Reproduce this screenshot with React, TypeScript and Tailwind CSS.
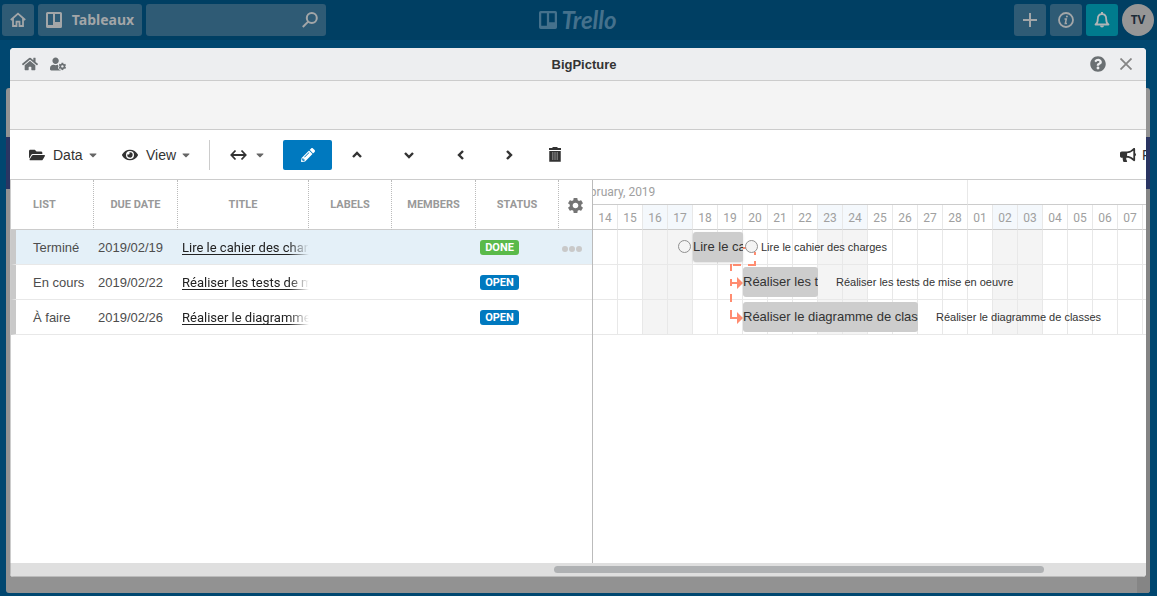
import React from "react";
import {
  FaBullhorn,
  FaCaretDown,
  FaEye,
  FaFolderOpen,
  FaHome,
  FaPencilAlt,
  FaQuestionCircle,
  FaUserCog,
} from "react-icons/fa";
import { MdSettings } from "react-icons/md";

type Task = {
  list: string;
  due: string;
  title: string;
  status: "DONE" | "OPEN";
  start: number;
  days: number;
  selected?: boolean;
};

const DAY = 25;

const tasks: Task[] = [
  { list: "Terminé", due: "2019/02/19", title: "Lire le cahier des charges", status: "DONE", start: 4, days: 2, selected: true },
  { list: "En cours", due: "2019/02/22", title: "Réaliser les tests de mise en oeuvre", status: "OPEN", start: 6, days: 3 },
  { list: "À faire", due: "2019/02/26", title: "Réaliser le diagramme de classes", status: "OPEN", start: 6, days: 7 },
];

const days = [
  "14", "15", "16", "17", "18", "19", "20", "21", "22", "23", "24", "25",
  "26", "27", "28", "01", "02", "03", "04", "05", "06", "07", "08",
];
const weekend = new Set(["16", "17", "23", "24", "02", "03"]);

function BoardIcon({ className }: { className: string }) {
  return (
    <svg viewBox="0 0 16 16" className={className} aria-hidden="true">
      <path
        fill="currentColor"
        fillRule="evenodd"
        d="M1.5 0h13A1.5 1.5 0 0 1 16 1.5v13a1.5 1.5 0 0 1-1.5 1.5h-13A1.5 1.5 0 0 1 0 14.500v-13A1.500 1.500 0 0 1 1.500 0ZM2 2v11h5V2ZM9 2v8h5V2Z"
      />
    </svg>
  );
}

function TopBar() {
  const tile = "flex h-8 items-center justify-center rounded-[3px] bg-[#2f5b75] text-[#a3a6a8]";
  return (
    <header className="flex h-10 items-center justify-between bg-[#003f63] pr-[3px] pl-[2px]">
      <div className="flex flex-1 gap-1">
        <button aria-label="Accueil" className={`${tile} w-8`}>
          <svg viewBox="0 0 16 16" className="size-4" fill="none" stroke="currentColor" strokeWidth="1.8" aria-hidden="true">
            <path d="M.8 8 8 1.600 15.200 8M3 6.500V14h3.500v-4.300h3V14H13V6.500" />
          </svg>
        </button>
        <button className={`${tile} w-[104px] gap-[10px] font-['Noto_Sans',sans-serif] text-sm font-bold`}>
          <BoardIcon className="size-4" />
          Tableaux
        </button>
        <div className={`${tile} w-[180px] pr-2`}>
          <input aria-label="Rechercher" className="h-full min-w-0 flex-1 bg-transparent px-2 text-sm outline-none" />
          <svg viewBox="0 0 16 16" className="size-4" fill="none" stroke="currentColor" strokeWidth="2" aria-hidden="true">
            <circle cx="9.800" cy="6" r="5" />
            <path d="M6.200 9.600.8 15" />
          </svg>
        </div>
      </div>
      <a href="#" className="flex items-center gap-1 text-[#45718c]">
        <BoardIcon className="size-[18px]" />
        <span className="font-[Lato,sans-serif] text-2xl leading-6 font-bold italic">Trello</span>
      </a>
      <div className="flex flex-1 justify-end gap-1">
        <button aria-label="Créer" className={`${tile} w-8`}>
          <svg viewBox="0 0 14 14" className="size-[14px]" stroke="currentColor" strokeWidth="2" aria-hidden="true">
            <path d="M7 0v14M0 7h14" />
          </svg>
        </button>
        <button aria-label="Informations" className={`${tile} w-8`}>
          <svg viewBox="0 0 16 16" className="size-4" fill="none" stroke="currentColor" aria-hidden="true">
            <circle cx="8" cy="8" r="7" strokeWidth="1.800" />
            <path d="M6.500 7H8.300L7.300 11.500H9" strokeWidth="1.500" />
            <circle cx="8.900" cy="4.500" r="1" fill="currentColor" stroke="none" />
          </svg>
        </button>
        <button aria-label="Notifications" className="flex size-8 items-center justify-center rounded-[3px] bg-[#007b8d] text-[#b0b5b7]">
          <svg viewBox="0 0 16 16" className="size-4" aria-hidden="true">
            <path d="M1.500 12.500c2-1.200 2.300-3 2.300-5.500C3.800 4 5.300 2.200 8 2.200S12.200 4 12.200 7c0 2.500.3 4.300 2.300 5.500Z" fill="none" stroke="currentColor" strokeWidth="1.800" strokeLinejoin="round" />
            <path d="M7 0h2v2H7zM6 13.500h4a2 2 0 0 1-4 0Z" fill="currentColor" />
          </svg>
        </button>
        <button className="size-8 rounded-full bg-[#969696] font-['Noto_Sans',sans-serif] text-xs font-bold text-[#1d2b38]">TV</button>
      </div>
    </header>
  );
}

function Chevron({ d, label, className }: { d: string; label: string; className: string }) {
  return (
    <button aria-label={label} className={`flex h-[30px] items-center justify-center ${className}`}>
      <svg viewBox="0 0 10 10" className="size-[10px]" fill="none" stroke="currentColor" strokeWidth="2.400" aria-hidden="true">
        <path d={d} />
      </svg>
    </button>
  );
}

function Toolbar() {
  return (
    <div className="flex h-[50px] items-center overflow-hidden border-b border-[#ccc] pl-[19px] text-sm text-[#333]">
      <button className="flex w-[93px] items-center">
        <FaFolderOpen className="mr-2 size-4" />
        Data
        <FaCaretDown className="ml-1 size-3 text-[#666]" />
      </button>
      <button className="flex w-[87px] items-center">
        <FaEye className="mr-2 size-4" />
        View
        <FaCaretDown className="ml-1 size-3 text-[#666]" />
      </button>
      <span className="h-[30px] w-px shrink-0 bg-[#ccc]" />
      <button aria-label="Dates" className="flex w-[73px] items-center gap-[7px] pl-5">
        <svg viewBox="0 0 17 12" className="h-3 w-[17px]" fill="none" stroke="currentColor" strokeWidth="1.800" aria-hidden="true">
          <path d="M1.500 6h14M5.500 1.500 1.300 6l4.200 4.500M11.500 1.500 15.700 6l-4.200 4.500" />
        </svg>
        <FaCaretDown className="size-3 text-[#666]" />
      </button>
      <button aria-label="Edit" className="flex h-[30px] w-[49px] shrink-0 items-center justify-center rounded-[2px] bg-[#0079bf] text-white">
        <FaPencilAlt className="size-[14px]" />
      </button>
      <Chevron label="Up" className="w-[50px]" d="M1 7l4-4 4 4" />
      <Chevron label="Down" className="w-[54px]" d="M1 3l4 4 4-4" />
      <Chevron label="Outdent" className="w-[50px]" d="M7 1 3 5l4 4" />
      <Chevron label="Indent" className="w-[46px]" d="M3 1l4 4-4 4" />
      <button aria-label="Delete" className="flex h-[30px] w-[46px] items-center justify-center">
        <svg viewBox="0 0 12 15" className="h-[15px] w-3" fill="none" stroke="currentColor" aria-hidden="true">
          <path d="M0 2h12M3.500 1h5" strokeWidth="2" />
          <path d="M1 4v10h10V4" fill="currentColor" strokeWidth="1.500" />
          <path d="M3.800 5v8M6 5v8M8.200 5v8" stroke="#aaa" strokeWidth=".8" />
        </svg>
      </button>
      <button className="-mr-[54px] ml-auto flex w-20 shrink-0 items-center gap-[6px]">
        <FaBullhorn className="size-4 shrink-0" />
        Feedback
      </button>
    </div>
  );
}

const columns = ["DUE DATE", "TITLE", "LABELS", "MEMBERS", "STATUS"];

function TaskTable() {
  const head = "border-r border-dotted border-[#bbb] p-0 pt-[2px]";
  return (
    <table className="w-full table-fixed border-separate border-spacing-0 text-[13px] text-[#4d4d4d]">
      <colgroup>
        <col className="w-[83px]" />
        <col className="w-[84px]" />
        <col className="w-[131px]" />
        <col className="w-[83px]" />
        <col className="w-[84px]" />
        <col className="w-[83px]" />
        <col />
      </colgroup>
      <thead>
        <tr className="h-[50px] font-[Roboto,sans-serif] text-[11px] text-[#999]">
          <th className={`${head} border-b border-b-[#ccc] pl-[22px] text-left [border-bottom-style:solid]`}>LIST</th>
          {columns.map((c) => (
            <th key={c} className={`${head} border-b border-b-[#ccc] [border-bottom-style:solid]`}>{c}</th>
          ))}
          <th className="border-b border-[#ccc] p-0 pt-[2px]">
            <button aria-label="Columns" className="flex w-full justify-center text-[#757575]">
              <MdSettings className="size-[19px]" />
            </button>
          </th>
        </tr>
      </thead>
      <tbody>
        {tasks.map((t) => (
          <tr key={t.title} className={`h-[35px] whitespace-nowrap [&>td]:border-b [&>td]:border-b-[#e8e8e8] ${t.selected ? "bg-[#e4f0f8]" : "bg-white"}`}>
            <td className="border-l-[5px] border-l-[#c9c9c9] p-0 pt-[2px] pl-[17px]">{t.list}</td>
            <td className="p-0 pt-[2px] pl-1">{t.due}</td>
            <td className="p-0 pt-[2px] pl-1">
              <a href="#" className="block overflow-hidden [mask-image:linear-gradient(to_right,black_84%,transparent_100%)] font-[Roboto,sans-serif] text-[#222] underline underline-offset-2">
                {t.title}
              </a>
            </td>
            <td />
            <td />
            <td className="p-0 pl-1">
              <span className={`block h-[15px] w-[39px] rounded-[3px] text-center font-[Roboto,sans-serif] text-[11px] leading-[15px] font-bold text-white ${t.status === "DONE" ? "bg-[#5aba4a]" : "bg-[#0079bf]"}`}>
                {t.status}
              </span>
            </td>
            <td className="p-0 pl-[3px]">
              {t.selected && (
                <button aria-label="More" className="mt-1 flex gap-px">
                  <span className="size-[6px] rounded-full bg-[#c9c9c9]" />
                  <span className="size-[6px] rounded-full bg-[#c9c9c9]" />
                  <span className="size-[6px] rounded-full bg-[#c9c9c9]" />
                </button>
              )}
            </td>
          </tr>
        ))}
      </tbody>
    </table>
  );
}

function Gantt() {
  return (
    <div className="relative min-w-0 flex-1 overflow-hidden border-l border-[#bbb]">
      <table className="w-[575px] table-fixed border-separate border-spacing-0 font-[Roboto,sans-serif] text-xs text-[#a0a0a0]">
        <thead>
          <tr className="h-[25px]">
            <th colSpan={15} className="border-r border-b border-r-[#e8e8e8] border-b-[#ccc] p-0 text-left -indent-4 font-normal">February, 2019</th>
            <th colSpan={8} className="border-b border-[#ccc] p-0" />
          </tr>
          <tr className="h-[25px]">
            {days.map((d) => (
              <th key={d} className={`border-r border-b border-r-[#e8e8e8] border-b-[#ccc] p-0 pt-[2px] font-normal ${weekend.has(d) ? "bg-[#f4f8fc]" : ""}`}>{d}</th>
            ))}
          </tr>
        </thead>
        <tbody>
          {tasks.map((t) => (
            <tr key={t.title} className="h-[35px]">
              {days.map((d) => (
                <td key={d} className={`border-r border-b border-[#e8e8e8] p-0 ${weekend.has(d) ? "bg-[#f4f4f4]" : ""}`} />
              ))}
            </tr>
          ))}
        </tbody>
      </table>
      <div className="absolute top-[50px] left-0">
        <svg width="330" height="105" className="absolute top-0 left-0" fill="none" stroke="#ff8c70" strokeWidth="2" aria-hidden="true">
          <path d="M150 18h3M162 22v3M162 31v4h-7M148 35h-8M138 34v7M138 49v7M138 53h7M138 64v8M138 80v8h7" />
          <path d="M144 47v12l6-6zM144 82v12l6-6z" fill="#ff8c70" stroke="none" />
        </svg>
        {tasks.map((t) => (
          <div key={t.title} className="relative h-[35px] whitespace-nowrap text-[#333]">
            <div
              className={`absolute top-[2px] h-[30px] overflow-hidden rounded-[3px] bg-[#cdcdcd] text-[13px] leading-[30px] ${t.selected ? "shadow" : ""}`}
              style={{ left: t.start * DAY, width: t.days * DAY }}
            >
              {t.title}
            </div>
            {t.selected && (
              <>
                <span className="absolute top-[10px] size-[13px] rounded-full border border-[#909090] bg-[#f4f4f4]" style={{ left: t.start * DAY - 15 }} />
                <span className="absolute top-[10px] size-[13px] rounded-full border border-[#909090] bg-[#f4f4f4]" style={{ left: (t.start + t.days) * DAY + 2 }} />
              </>
            )}
            <span className="absolute top-0 text-[11px] leading-[35px]" style={{ left: (t.start + t.days) * DAY + 18 }}>
              {t.title}
            </span>
          </div>
        ))}
      </div>
    </div>
  );
}

export default function App() {
  return (
    <div className="flex min-h-screen flex-col bg-[#004770] font-['Liberation_Sans',Arial,sans-serif]">
      <TopBar />
      <div className="grid flex-1 grid-cols-1 grid-rows-1">
        <div className="col-start-1 row-start-1 mt-12 mr-[7px] mb-[3px] ml-[6px] flex flex-col overflow-hidden rounded-[3px] bg-[#929292]">
          <div className="mt-[49px] h-[52px] bg-[#2a3562]" />
          <div className="ml-auto w-[13px] flex-1 bg-[#858585]" />
        </div>
        <main className="z-10 col-start-1 row-start-1 mt-2 mr-[11px] mb-[19px] ml-[10px] flex min-w-0 flex-col overflow-hidden rounded-[4px] bg-white">
          <div className="flex h-[33px] items-center border-b border-[#ccc] bg-[#edeef0] px-3 text-[#6b7073]">
            <div className="flex flex-1 gap-3">
              <button aria-label="Home"><FaHome className="size-4" /></button>
              <button aria-label="User settings"><FaUserCog className="size-4" /></button>
            </div>
            <h1 className="pt-px pl-3 text-[13px] font-bold text-[#333]">BigPicture</h1>
            <div className="flex flex-1 items-center justify-end gap-[14px]">
              <button aria-label="Help"><FaQuestionCircle className="size-4" /></button>
              <button aria-label="Close" className="mr-[2px]">
                <svg viewBox="0 0 12 12" className="size-3" stroke="#858585" strokeWidth="1.800" aria-hidden="true">
                  <path d="M.5.5l11 11M11.500.5l-11 11" />
                </svg>
              </button>
            </div>
          </div>
          <div className="h-[49px] border-b border-[#ccc] bg-[#f4f4f4]" />
          <Toolbar />
          <div className="flex flex-1 border-l border-[#ccc]">
            <div className="w-[581px] shrink-0">
              <TaskTable />
            </div>
            <Gantt />
          </div>
          <div className="flex h-[14px] items-center border-b border-l border-[#bbb] bg-[#dfdfdf]">
            <div className="ml-[47.8%] h-[7px] w-[43.2%] rounded-full bg-[#afb1b3]" />
          </div>
        </main>
      </div>
    </div>
  );
}
